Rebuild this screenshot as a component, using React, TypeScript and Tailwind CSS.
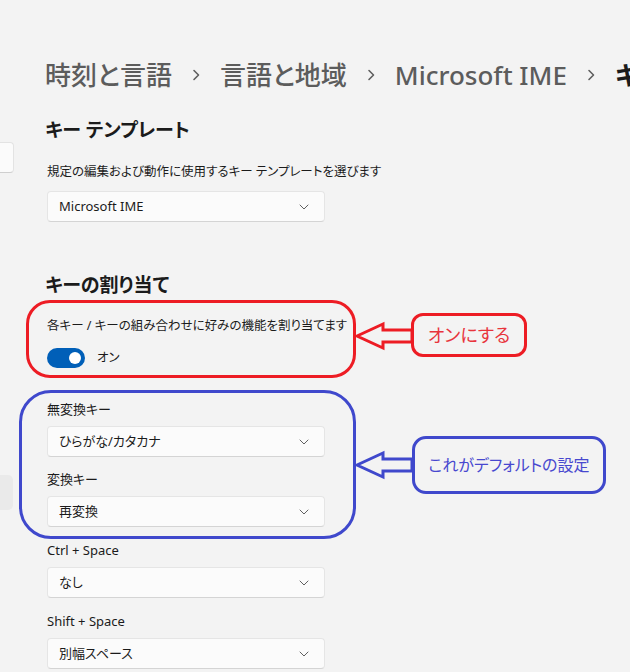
const font = "font-['Noto_Sans','Noto_Sans_CJK_JP',sans-serif]";

function Chevron({ className = "" }: { className?: string }) {
  return (
    <svg viewBox="0 0 10 6" className={className} fill="none">
      <path d="M1 1l4 4 4-4" stroke="currentColor" strokeWidth="1" strokeLinecap="round" strokeLinejoin="round" />
    </svg>
  );
}

function Crumb({ children }: { children: React.ReactNode }) {
  return <span className="whitespace-nowrap">{children}</span>;
}

function CrumbSep() {
  return (
    <svg viewBox="0 0 8 12" className="h-[12px] w-[8px] shrink-0 text-[#5f5f5f]" fill="none">
      <path d="M2 1.5l4.5 4.5L2 10.5" stroke="currentColor" strokeWidth="1.6" strokeLinecap="round" strokeLinejoin="round" />
    </svg>
  );
}

function Select({ value }: { value: string }) {
  return (
    <div className="flex h-[31px] w-[278px] items-center justify-between rounded-[4px] border border-[#e5e5e5] border-b-[#d4d4d4] bg-[#fbfbfb] pl-[11px] pr-[15px] text-[13px] text-[#1b1b1b]">
      <span>{value}</span>
      <Chevron className="h-[6px] w-[10px] text-[#606060]" />
    </div>
  );
}

function Field({ label, value, className = "" }: { label: string; value: string; className?: string }) {
  return (
    <div className={className}>
      <div className="h-5 text-[13px] leading-5 text-[#1b1b1b]">{label}</div>
      <div className="mt-[7px]">
        <Select value={value} />
      </div>
    </div>
  );
}

// hollow arrow pointing left, shaft runs into the callout box
function HollowArrow({ color, className }: { color: string; className: string }) {
  return (
    <svg viewBox="0 0 60 36" className={className} fill="none">
      <path
        d="M3 18 L29 6 L29 12 L58 12 L58 24 L29 24 L29 30 Z"
        stroke={color}
        strokeWidth="3"
        strokeLinejoin="miter"
      />
    </svg>
  );
}

export default function App() {
  return (
    <div className={`${font} relative flex h-[672px] w-[630px] overflow-hidden bg-[#f3f3f3] text-[#1b1b1b] [font-feature-settings:'palt']`}>
      {/* navigation pane, mostly scrolled off to the left */}
      <aside className="w-[14px] shrink-0">
        <div className="ml-[-40px] mt-[142px] h-[31px] w-[54px] rounded-[4px] border border-[#e3e3e3] border-b-[#cfcfcf] bg-[#fbfbfb]" />
        <div className="ml-[-40px] mt-[302px] h-[35px] w-[53px] rounded-[5px] bg-[#eaeaea]" />
      </aside>

      <main className="min-w-0 flex-1 pl-[31px] pt-[55px]">
        <nav className="flex h-10 items-center gap-[20px] text-[26px] font-medium leading-10 text-[#5c5c5c]">
          <Crumb>時刻と言語</Crumb>
          <CrumbSep />
          <Crumb>言語と地域</Crumb>
          <CrumbSep />
          <Crumb>Microsoft IME</Crumb>
          <CrumbSep />
          <span className="whitespace-nowrap font-semibold text-[#1b1b1b]">キー</span>
        </nav>

        <h2 className="mt-[21px] h-7 text-[19px] font-semibold leading-7">キー テンプレート</h2>
        <p className="ml-[2px] mt-[18px] h-5 text-[12.5px] leading-5">規定の編集および動作に使用するキー テンプレートを選びます</p>
        <div className="ml-[2px] mt-[9px]">
          <Select value="Microsoft IME" />
        </div>

        <h2 className="mt-[49px] h-7 text-[19px] font-semibold leading-7">キーの割り当て</h2>
        <p className="ml-[2px] mt-[17px] h-5 text-[12.5px] leading-5">各キー / キーの組み合わせに好みの機能を割り当てます</p>
        <div className="ml-[2px] mt-[12px] flex h-5 items-center gap-[12px]">
          <div className="flex h-5 w-[38px] items-center justify-end rounded-full bg-[#005fb8] pr-[4px]">
            <div className="h-[12px] w-[12px] rounded-full bg-white" />
          </div>
          <span className="text-[12.5px]">オン</span>
        </div>

        <div className="ml-[2px]">
          <Field className="mt-[31px]" label="無変換キー" value="ひらがな/カタカナ" />
          <Field className="mt-[12px]" label="変換キー" value="再変換" />
          <Field className="mt-[13px]" label="Ctrl + Space" value="なし" />
          <Field className="mt-[13px]" label="Shift + Space" value="別幅スペース" />
        </div>
      </main>

      {/* annotations drawn over the settings */}
      <div className="pointer-events-none absolute left-[26px] top-[300px] h-[78px] w-[330px] rounded-[24px] border-[3px] border-[#ed1c24]" />
      <HollowArrow color="#ed1c24" className="absolute left-[354px] top-[318px] h-[36px] w-[60px]" />
      <div className="absolute left-[411px] top-[313px] flex h-[44px] w-[116px] items-center justify-center rounded-[12px] border-[3px] border-[#ed1c24] text-[18px] text-[#e8343c]">
        オンにする
      </div>

      <div className="pointer-events-none absolute left-[19px] top-[390px] h-[149px] w-[337px] rounded-[32px] border-[3px] border-[#3f48cc]" />
      <HollowArrow color="#3f48cc" className="absolute left-[354px] top-[447px] h-[36px] w-[60px]" />
      <div className="absolute left-[412px] top-[436px] flex h-[58px] w-[194px] items-center justify-center rounded-[14px] border-[3px] border-[#3f48cc] text-[16px] text-[#4848cf]">
        これがデフォルトの設定
      </div>
    </div>
  );
}
